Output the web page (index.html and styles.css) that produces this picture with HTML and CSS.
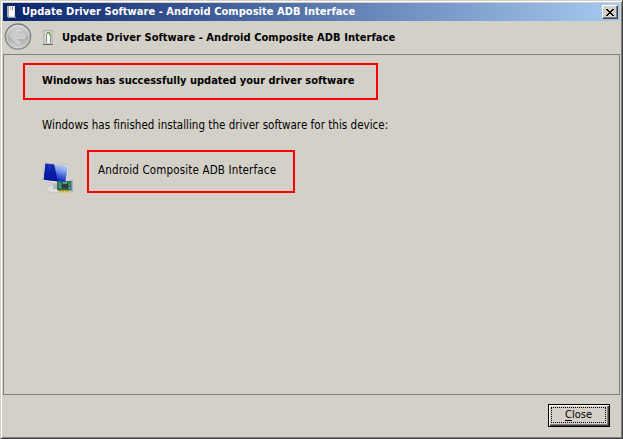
FILE: index.html
```html
<!DOCTYPE html>
<html lang="en">
<head>
<meta charset="utf-8">
<title>Update Driver Software</title>
<link rel="stylesheet" href="styles.css">
</head>
<body>
<div class="window">
  <header class="titlebar">
    <svg class="title-icon" width="16" height="18" viewBox="0 0 16 18">
      <path d="M4 3h8v11H4z" fill="#e4e4e4"/><path d="M4 3h2v11H4z" fill="#aaa"/><path d="M6 4h5v9H6z" fill="#fff"/><path d="M7 4h1v3H7z" fill="#bbb"/><path d="M9 4h1v3H9z" fill="#888"/><path d="M5 14h8v1H5z" fill="#8b94a5"/>
    </svg>
    <h1 class="title"><span class="t-title">Update Driver Software - Android Composite ADB Interface</span></h1>
    <button class="close-x" aria-label="Close window">
      <svg width="8" height="7" viewBox="0 0 8 7" shape-rendering="crispEdges"><path d="M0 0h2v1h1v1h2V1h1V0h2v1H7v1H6v1H5v1h1v1h1v1h1v1H6V6H5V5H3v1H2v1H0V6h1V5h1V4h1V3H2V2H1V1H0z"/></svg>
    </button>
  </header>
  <nav class="wizard-head">
    <svg class="back" width="28" height="28" viewBox="0 0 28 28">
      <defs>
        <linearGradient id="ring" x2="0" y2="1"><stop stop-color="#777b7d"/><stop offset="1" stop-color="#8f9395"/></linearGradient>
        <linearGradient id="disc" x2="0" y2="1"><stop stop-color="#d6d6d5"/><stop offset=".48" stop-color="#bcbdbd"/><stop offset=".52" stop-color="#a9abab"/><stop offset="1" stop-color="#d0d2d2"/></linearGradient>
      </defs>
      <circle cx="14" cy="13.5" r="12.6" fill="url(#disc)" stroke="url(#ring)" stroke-width="1.5"/>
      <circle cx="14" cy="13.5" r="11.2" fill="none" stroke="#dedfdf" stroke-opacity=".65"/>
      <path d="M6.5 13.5 13 7.2h3l-4.3 4.6h9v3.5h-9l4.3 4.6h-3z" fill="#c8c9c8" stroke="#dfdfdd" stroke-width=".8"/>
    </svg>
    <svg class="device" width="12" height="16" viewBox="0 0 12 16">
      <path d="M2 .5h8v13.5H2z" fill="#d9dad7" stroke="#a0a39e" stroke-width=".8"/><path d="M4.5 4v9M8.5 4v9" stroke="#8d918d"/><path d="M5 4h3v9H5z" fill="#f7f8f6"/><path d="M5 2h3v1H5zM5 3h1v1H5zM7 3h1v2H7z" fill="#42b51e"/><path d="M1 14h10v1H1z" fill="#656865"/>
    </svg>
    <h2 class="title"><span class="t-head">Update Driver Software - Android Composite ADB Interface</span></h2>
  </nav>
  <main class="page">
    <div class="mark mark-result"><strong class="t-result">Windows has successfully updated your driver software</strong></div>
    <p class="message"><span class="t-message">Windows has finished installing the driver software for this device:</span></p>
    <div class="device-row">
      <svg class="computer" width="32" height="32" viewBox="0 0 32 32">
        <defs>
          <linearGradient id="screen" x1=".9" y1="0" x2=".5" y2="1"><stop stop-color="#d3e0f8"/><stop offset=".35" stop-color="#88a5ec"/><stop offset=".75" stop-color="#2542cf"/><stop offset="1" stop-color="#0818a8"/></linearGradient>
        </defs>
        <ellipse cx="12" cy="27" rx="7" ry="3.7" fill="#dcdddd" stroke="#bcbdbd" stroke-width=".6"/>
        <path d="M11 22h7v5h-7z" fill="#b6b9bb"/>
        <path d="M2.3 1 27.5 3 25 23 .8 19.5z" fill="#e5e5e5" stroke="#b4b6ba" stroke-width=".7"/>
        <path d="M3.4 1.6 26 3.7 23.4 20.3 1.8 17.8z" fill="url(#screen)"/>
        <path d="m3.4 1.6 8.8.9 3.8 17L1.8 17.8z" fill="#07179d" fill-opacity=".9"/>
        <path d="M5 2h4l-1 9z" fill="#173fd0" fill-opacity=".6"/>
        <path d="M17 28h10v2.5H17z" fill="#dba72d"/><path d="M19.5 28v3M22.5 28v3M25 28v3" stroke="#f3d66e" stroke-width=".8"/>
        <path d="M15.5 19.5h13.8V28H15.5z" fill="#237c5c" stroke="#175943" stroke-width=".7"/>
        <path d="M20 21.5h6v5h-6z" fill="#333b3c"/><path d="M17 22h1.5M17 25h1.5M21 21h4M27 22h1.5M27 26h1.5" stroke="#a0c9b5"/>
        <path d="M30 18v12" stroke="#8097b5" stroke-width="1.2"/>
      </svg>
      <div class="mark mark-device"><span class="t-device">Android Composite ADB Interface</span></div>
    </div>
  </main>
  <footer class="actions">
    <button class="close-button"><span class="close-face"><span class="t-close"><span class="key">C</span>lose</span></span></button>
  </footer>
</div>
</body>
</html>
```

FILE: styles.css
```css
* { box-sizing: border-box; }
body { margin: 0; background: #d4d0c8; }
.window {
  width: 623px; height: 439px; display: flex; flex-direction: column;
  padding: 1px; background: #d3d0c8; color: #000;
  border: 1px solid; border-color: #d4d0c8 #404040 #404040 #d4d0c8;
  box-shadow: inset 1px 1px #fff, inset -1px -1px #808080;
  font: 11.5px/16px "DejaVu Sans Condensed", "DejaVu Sans", sans-serif;
  font-stretch: condensed; white-space: nowrap;
}
.titlebar {
  height: 18px; margin: 1px 1px 0; padding-right: 2px;
  display: flex; align-items: center; flex: none;
  background: linear-gradient(90deg, #0a246a, #a6caf0); color: #fff;
}
.title { margin: 0; font-size: 11px; font-weight: bold; }
.title-icon { margin-right: 4px; }
.title-icon + .title { margin-left: -1px; }
.close-x {
  width: 16px; height: 14px; margin-left: auto; padding: 0;
  display: grid; place-items: center; background: #d4d0c8;
  border: 1px solid; border-color: #fff #404040 #404040 #fff;
  box-shadow: inset -1px -1px #808080;
}
.wizard-head { height: 33px; display: flex; align-items: center; flex: none; padding-left: 2px; }
.back { margin-top: -1px; }
.device { margin: 1px 8px 0 10px; }
.page {
  height: 341px; flex: none; margin: 0 1px; padding: 8px 0 0 19px;
  border: 1px solid #808080;
}
.mark { border: 2px solid #f00; display: flex; align-items: center; }
.mark-result { width: 355px; height: 37px; padding: 0 0 1px 17px; font-size: 11px; }
.message { margin: 17px 0 0 19px; line-height: 16px; }
.device-row { display: flex; margin: 17px 0 0 18px; }
.computer { margin: 12px 14px 0 1px; }
.mark-device { width: 208px; height: 43px; padding: 0 0 3px 9px; margin-left: -1px; }
.actions { flex: 1; display: flex; justify-content: flex-end; align-items: flex-start; padding: 9px 11px 0; }
.close-button {
  width: 62px; height: 23px; padding: 2px 3px 3px 2px; background: #d4d0c8; color: #000;
  border: 1px solid #000; font: inherit; font-size: 11px; font-stretch: inherit;
  box-shadow: inset 1px 1px #fff, inset -1px -1px #404040, inset -2px -2px #808080;
}
.close-face { height: 100%; border: 1px dotted #000; display: flex; align-items: center; justify-content: center; }
.key { text-decoration: underline; text-underline-offset: 2px; }
.t-title, .t-head { letter-spacing: 0.05px; }
.t-device { letter-spacing: 0.15px; }
.t-message { letter-spacing: 0.03px; }
```
